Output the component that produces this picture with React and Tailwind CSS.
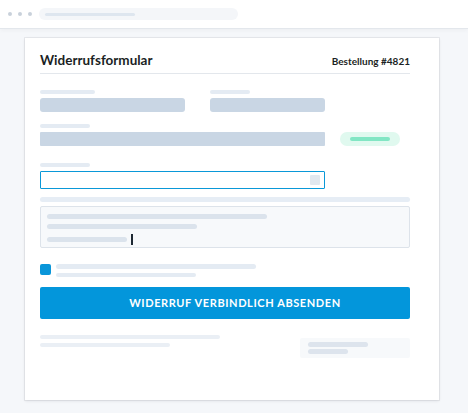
import React from "react";

const Bar = ({ className = "" }) => <div className={`rounded-full ${className}`} />;

export default function App() {
  return (
    <div className="min-h-[413px] w-[468px] bg-[#f5f7fa] font-['Lato','Liberation_Sans',sans-serif] text-[#1b1f24]">
      {/* Browser chrome */}
      <div className="flex h-[29px] items-center border-b border-[#e3e7ec] bg-white pl-[8px] shadow-[0_2px_4px_rgba(15,23,42,0.03)]">
        <div className="flex items-center gap-[6px]">
          <span className="h-[4px] w-[4px] rounded-full bg-[#c9d1db]" />
          <span className="h-[4px] w-[4px] rounded-full bg-[#c9d1db]" />
          <span className="h-[4px] w-[4px] rounded-full bg-[#c9d1db]" />
        </div>
        <div className="ml-[7px] flex h-[12px] w-[199px] items-center rounded-full bg-[#f4f6f9] pl-[6px]">
          <Bar className="h-[3px] w-[90px] bg-[#dee6ef]" />
        </div>
      </div>

      {/* Card */}
      <div className="ml-[25px] mt-[9px] w-[414px] bg-white pl-[15px] pr-[29px] pb-[42px] shadow-[0_0_0_1px_rgba(15,23,42,0.06),0_1px_3px_rgba(15,23,42,0.1)]">
        {/* Header */}
        <div className="flex items-baseline justify-between border-b border-[#e3e7ec] pt-[14px] pb-[3px]">
          <h1 className="text-[13.5px] font-bold leading-[17px]">Widerrufsformular</h1>
          <span className="text-[10px] font-bold leading-[17px]">Bestellung #4821</span>
        </div>

        {/* Row 1 */}
        <div className="mt-[16px] flex gap-[25px]">
          <div className="flex w-[145px] flex-col gap-[4px]">
            <Bar className="h-[4px] w-[55px] bg-[#e4ebf3]" />
            <div className="h-[14px] w-[145px] rounded-[3px] bg-[#c9d6e4]" />
          </div>
          <div className="flex w-[115px] flex-col gap-[4px]">
            <Bar className="h-[4px] w-[40px] bg-[#e4ebf3]" />
            <div className="h-[14px] w-[115px] rounded-[3px] bg-[#c9d6e4]" />
          </div>
        </div>

        {/* Row 2 */}
        <div className="mt-[12px] flex flex-col gap-[4px]">
          <Bar className="h-[4px] w-[50px] bg-[#e4ebf3]" />
          <div className="flex items-center gap-[15px]">
            <div className="h-[14px] w-[285px] rounded-[1px] bg-[#c9d6e4]" />
            <div className="flex h-[14px] w-[60px] items-center justify-center rounded-full bg-[#e0f9ef]">
              <Bar className="h-[4px] w-[40px] bg-[#82e6c4]" />
            </div>
          </div>
        </div>

        {/* Row 3 input */}
        <div className="mt-[17px] flex flex-col gap-[4px]">
          <Bar className="h-[4px] w-[50px] bg-[#e4ebf3]" />
          <div className="flex h-[18px] w-[285px] items-center justify-end rounded-[1px] border border-[#0a98d8] pr-[4px]">
            <div className="h-[10px] w-[10px] rounded-[1px] bg-[#e2e8ef]" />
          </div>
        </div>

        <div className="mt-[8px] h-[5px] w-[370px] rounded-full bg-[#e6edf5]" />

        {/* Textarea */}
        <div className="mt-[4px] flex h-[42px] w-[370px] flex-col gap-[5px] rounded-[2px] border border-[#dde3ea] bg-[#f7f9fb] pl-[6px] pt-[7px]">
          <Bar className="h-[5px] w-[220px] bg-[#dbe3ec]" />
          <Bar className="h-[5px] w-[150px] bg-[#dbe3ec]" />
          <div className="flex items-center gap-[4px]">
            <Bar className="h-[5px] w-[80px] bg-[#dbe3ec]" />
            <div className="h-[11px] w-[1.5px] bg-[#1e2933]" />
          </div>
        </div>

        {/* Checkbox */}
        <div className="mt-[16px] flex gap-[5px]">
          <div className="h-[11px] w-[11px] rounded-[2px] bg-[#0a96d9]" />
          <div className="flex flex-col gap-[4px]">
            <Bar className="h-[5px] w-[200px] bg-[#e4ebf3]" />
            <Bar className="h-[4px] w-[140px] bg-[#e4ebf3]" />
          </div>
        </div>

        {/* Button */}
        <button className="mt-[10px] flex h-[32px] w-[370px] items-center justify-center rounded-[2px] bg-[#0396db] pl-[20px] text-[11px] font-bold uppercase tracking-[0.6px] text-white">
          Widerruf verbindlich absenden
        </button>

        {/* Footer */}
        <div className="mt-[16px] flex items-start justify-between">
          <div className="flex flex-col gap-[4px]">
            <Bar className="h-[4px] w-[180px] bg-[#eaeff5]" />
            <Bar className="h-[4px] w-[130px] bg-[#eaeff5]" />
          </div>
          <div className="mt-[3px] flex h-[20px] w-[110px] flex-col gap-[2px] rounded-[2px] bg-[#f7f9fb] pl-[8px] pt-[4px]">
            <Bar className="h-[5px] w-[60px] bg-[#dde4ed]" />
            <Bar className="h-[5px] w-[40px] bg-[#dde4ed]" />
          </div>
        </div>
      </div>
    </div>
  );
}
